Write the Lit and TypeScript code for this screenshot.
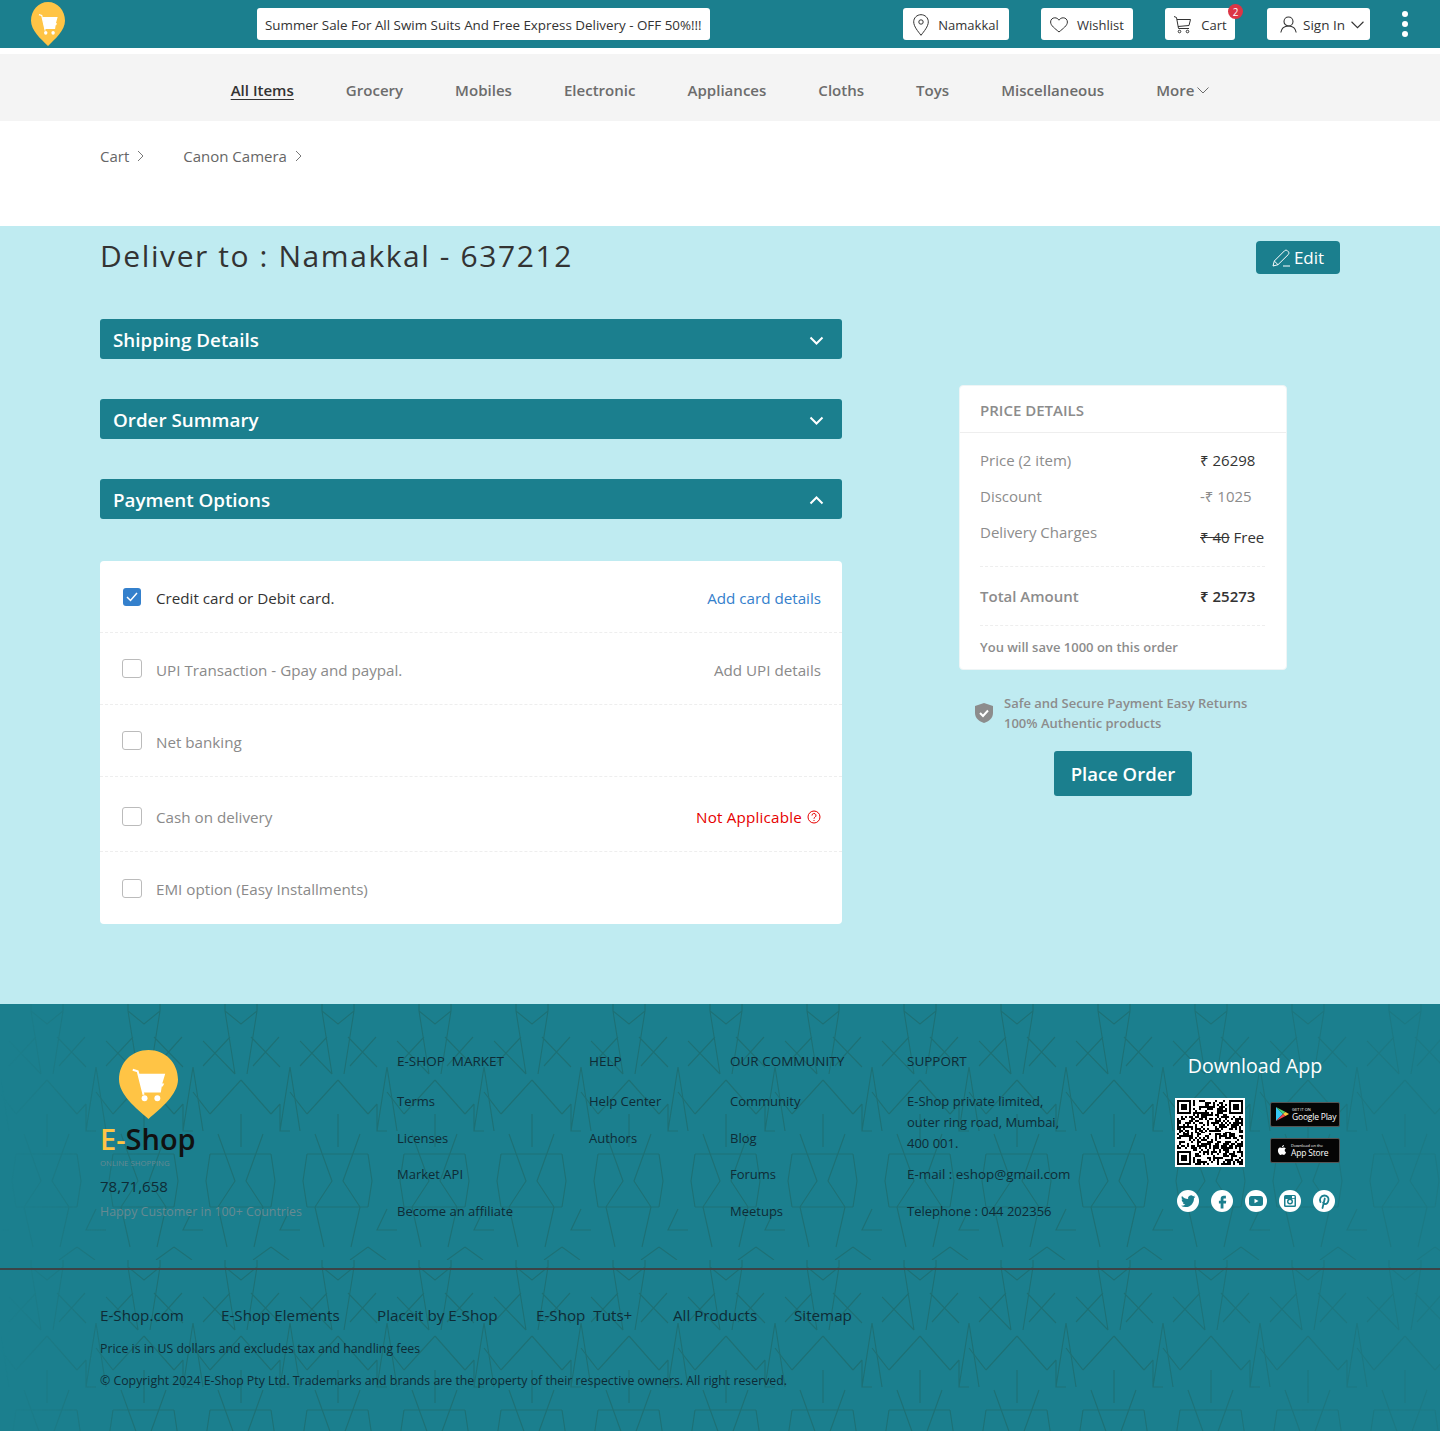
import { LitElement, html, css, svg } from "lit";
import { customElement } from "lit/decorators.js";

const chevron = (w = 12, h = 7) => html`<svg class="chev" width=${w} height=${h} viewBox="0 0 12 7" fill="none" stroke="currentColor" stroke-width="1"><path d="M.5.5 6 6l5.5-5.5" /></svg>`;
const barChevron = (up = false) => html`<svg class="chev ${up ? "up" : ""}" width="15" height="9" viewBox="0 0 15 9" fill="none" stroke="currentColor" stroke-width="2"><path d="M1.500 1.500l6 6 6-6" /></svg>`;
const crumbArrow = html`<svg width="7" height="12" viewBox="0 0 7 12" fill="none" stroke="#777" stroke-width="1"><path d="M1 1l5 5-5 5" /></svg>`;

const pinLogo = (w: number, h: number) => html`<svg width=${w} height=${h} viewBox="0 0 60 70" preserveAspectRatio="none">
  <path fill="#ffc445" d="M30 0C13 0 0 13 0 30c0 15 17 29 30 40 13-11 30-25 30-40C60 13 47 0 30 0z" />
  <path fill="none" stroke="#fff" stroke-width="2" d="M14 20l5 1.500 6 24" />
  <path fill="#fff" d="M20 24h27l-3 10h2l-1.500 3h-1l-1 6H24z" />
  <circle cx="26" cy="49" r="3" fill="#fff" /><circle cx="39" cy="49" r="3" fill="#fff" />
</svg>`;

const pinIcon = html`<svg width="16" height="22" viewBox="0 0 16 22" fill="none" stroke="#333" stroke-width="1"><path d="M8 .7C3.900.7.700 3.900.700 7.800c0 4.700 4.300 9.500 7.300 13.500 3-4 7.300-8.800 7.300-13.500C15.300 3.900 12.100.7 8 .7z" /><circle cx="8" cy="8" r="2.200" /></svg>`;
const heartIcon = html`<svg width="18" height="16" viewBox="0 0 18 16" fill="none" stroke="#333" stroke-width="1"><path d="M9 15C5 11.500.6 8.700.6 5 .6 2.600 2.400.8 4.800.8 6.600.8 8.100 1.700 9 3.200 9.900 1.700 11.400.8 13.200.8c2.400 0 4.200 1.800 4.200 4.200 0 3.700-4.400 6.500-8.400 10z" /></svg>`;
const cartIcon = html`<svg width="19" height="18" viewBox="0 0 18 18" fill="none" stroke="#333" stroke-width="1"><path d="M.5.500 3 1.500 5 12.500h10.500M3.500 3.500H17l-1.500 6L4.500 10.500" /><circle cx="6" cy="15.500" r="1.300" /><circle cx="14" cy="15.500" r="1.300" /></svg>`;
const userIcon = html`<svg width="17" height="17" viewBox="0 0 17 17" fill="none" stroke="#333" stroke-width="1.100"><circle cx="8.500" cy="5.500" r="4.500" /><path d="M.8 16.500c.6-3.800 3.300-6.500 7.700-6.500s7.100 2.700 7.700 6.500" /></svg>`;
const editIcon = html`<svg width="19" height="18" viewBox="0 0 19 18" fill="none" stroke="#fff" stroke-width="1"><path d="M1 17l1.300-5L12.500 1.800c.8-.8 2.200-.8 3 0l.8.8c.8.8.8 2.100 0 2.900L6 15.700 1 17zM2.300 12L6 15.700M11 17h7" /></svg>`;

const qrCells = () => {
  const n = 33;
  const cells: string[] = [];
  let seed = 7;
  const finder = (x: number, y: number) =>
    x >= 0 && y >= 0 && x < 7 && y < 7 && (x === 0 || y === 0 || x === 6 || y === 6 || (x > 1 && y > 1 && x < 5 && y < 5));
  const inFinder = (x: number, y: number) => (x < 8 && y < 8) || (x > n - 9 && y < 8) || (x < 8 && y > n - 9);
  for (let y = 0; y < n; y++) {
    for (let x = 0; x < n; x++) {
      seed = (seed * 1103515245 + 12345) & 0x7fffffff;
      let on = (seed >> 16) % 100 < 52;
      if (inFinder(x, y)) on = finder(x, y) || finder(x - (n - 7), y) || finder(x, y - (n - 7));
      if (on) cells.push(`M${x} ${y}h1v1h-1z`);
    }
  }
  return cells.join("");
};

const socials = [
  svg`<path transform="translate(4 4) scale(.6)" fill="#1b7f8e" d="M23.953 4.570a10 10 0 01-2.825.775 4.958 4.958 0 002.163-2.723c-.951.555-2.005.959-3.127 1.184a4.920 4.920 0 00-8.384 4.482C7.690 8.095 4.067 6.130 1.640 3.162a4.822 4.822 0 00-.666 2.475c0 1.710.870 3.213 2.188 4.096a4.904 4.904 0 01-2.228-.616v.060a4.923 4.923 0 003.946 4.827 4.996 4.996 0 01-2.212.085 4.936 4.936 0 004.604 3.417 9.867 9.867 0 01-6.102 2.105c-.390 0-.779-.023-1.170-.067a13.995 13.995 0 007.557 2.209c9.053 0 13.998-7.496 13.998-13.985 0-.210 0-.420-.015-.630A9.935 9.935 0 0024 4.590z" />`,
  svg`<path transform="translate(3 3) scale(.7)" fill="#1b7f8e" d="M14 8h3V4h-3c-2.800 0-4.500 1.800-4.500 4.500V11H7v4h2.500v7h4v-7H17l.5-4h-4V8.700c0-.4.2-.7.5-.7z" />`,
  svg`<rect x="4" y="6" width="14" height="10" rx="2.500" fill="#1b7f8e" /><path fill="#fff" d="M9.500 8.700l4 2.300-4 2.300z" />`,
  svg`<rect x="5" y="5" width="12" height="12" rx="1.500" fill="#1b7f8e" /><rect x="6.500" y="9" width="9" height="6.500" fill="#fff" /><circle cx="11" cy="11.500" r="3" fill="#1b7f8e" /><circle cx="11" cy="11.500" r="1.500" fill="#fff" /><rect x="13" y="6" width="2.500" height="2.200" fill="#fff" />`,
  svg`<path fill="none" stroke="#1b7f8e" stroke-width="1.800" stroke-linecap="round" d="M9.500 18l2.300-9.500M7.500 12C6 9 8 5.500 11.300 5.500c3 0 4.500 2 4.200 4.300-.3 2.500-1.800 4.200-3.600 4.200-1 0-1.700-.6-1.800-1.300" />`,
];

const paymentRows = [
  { label: "Credit card or Debit card.", checked: true, action: "Add card details", kind: "link", h: 72 },
  { label: "UPI Transaction - Gpay and paypal.", action: "Add UPI details", kind: "muted", h: 72 },
  { label: "Net banking", h: 72 },
  { label: "Cash on delivery", action: "Not Applicable", kind: "danger", h: 75, low: true },
  { label: "EMI option (Easy Installments)", h: 72 },
];

const footerColumns = [
  { title: "E-SHOP  MARKET", width: 192, links: ["Terms", "Licenses", "Market API", "Become an affiliate"] },
  { title: "HELP", width: 141, links: ["Help Center", "Authors"] },
  { title: "OUR COMMUNITY", width: 177, links: ["Community", "Blog", "Forums", "Meetups"] },
];

// one period of the footer lattice, drawn three times so lines wrap over the tile edge
const latticePath =
  "M22 0V7L38 20 54 7V0M22 7L32 70M54 7L44 70M0 37L32 70M27 33L0 62M48 33L77 63M76 33L50 62M38 76L7 110M38 76L68 110M7 110L-10 88M68 110L77 100M87 63L77 127H87M87 63L97 127M77 100V127M38 110V143M15 130L32 177 15 203M60 130L43 177 60 203M7 150H68M7 203H68M68 150L72 177 68 203M7 150L3 177 7 203M87 205L77 226H97M68 243L50 256M68 243L86 256M15 203L24 243M60 203L51 243";

@customElement("app-root")
export class AppRoot extends LitElement {
  static styles = css`
    :host {
      display: block;
      font-family: "Open Sans", "Noto Sans", "DejaVu Sans", sans-serif;
      color: #333;
      background: #fff;
      height: 1431px;
      overflow: hidden;
    }
    .topbar {
      height: 48px;
      background: #1b7f8e;
      display: flex;
      align-items: center;
      padding: 0 32px 0 31px;
    }
    .topbar .logo {
      display: flex;
      margin-right: 192px;
    }
    .white-box {
      height: 32px;
      padding-top: 1px;
      background: #fff;
      border-radius: 3px;
      display: flex;
      align-items: center;
      font-size: 13px;
      color: #333;
      white-space: nowrap;
    }
    .promo {
      width: 453px;
      padding-left: 8px;
      box-sizing: border-box;
      font-size: 13.400px;
    }
    .actions {
      margin-left: auto;
      display: flex;
      align-items: center;
      gap: 32px;
    }
    .act {
      box-sizing: border-box;
      position: relative;
      justify-content: center;
      gap: 9px;
    }
    .act.sign {
      justify-content: flex-start;
      gap: 6px;
      padding-left: 13px;
      font-size: 13.500px;
    }
    .badge {
      position: absolute;
      top: -4px;
      right: -8px;
      width: 15px;
      height: 15px;
      border-radius: 50%;
      background: #dc3545;
      color: #fff;
      font-size: 10px;
      display: flex;
      align-items: center;
      justify-content: center;
    }
    .kebab {
      display: flex;
      flex-direction: column;
      gap: 4px;
    }
    .kebab i {
      width: 6px;
      height: 6px;
      border-radius: 50%;
      background: #fff;
    }
    .nav {
      margin-top: 6px;
      height: 67px;
      box-sizing: border-box;
      padding-top: 5px;
      background: #f4f4f4;
      display: flex;
      align-items: center;
      justify-content: center;
      gap: 52px;
      font-size: 15.050px;
      font-weight: 600;
      color: #6c6c6c;
    }
    .nav .active {
      color: #333;
      text-decoration: underline;
      text-underline-offset: 3px;
    }
    .nav .more {
      display: flex;
      align-items: center;
      gap: 3px;
    }
    .crumbs {
      height: 105px;
      box-sizing: border-box;
      padding: 25px 0 0 100px;
      display: flex;
      gap: 39px;
      font-size: 15px;
      color: #666;
    }
    .crumbs span {
      display: flex;
      align-items: center;
      gap: 8px;
      height: 20px;
    }
    .main {
      height: 778px;
      background: #bfebf1;
      padding: 0 100px;
      box-sizing: border-box;
    }
    .deliver {
      display: flex;
      justify-content: space-between;
      height: 93px;
    }
    h1 {
      margin: 8px 0 0;
      font-size: 30px;
      line-height: 44px;
      font-weight: 400;
      letter-spacing: 1.580px;
      color: #333;
    }
    .edit {
      margin-top: 15px;
      width: 84px;
      height: 33px;
      background: #1b7f8e;
      border-radius: 4px;
      color: #fff;
      font-size: 17px;
      display: flex;
      align-items: center;
      justify-content: center;
      gap: 3px;
    }
    .columns {
      display: flex;
    }
    .left {
      width: 742px;
    }
    .bar {
      height: 40px;
      box-sizing: border-box;
      padding: 2px 18px 0 13px;
      background: #1b7f8e;
      border-radius: 3px;
      color: #fff;
      font-size: 18.800px;
      font-weight: 600;
      display: flex;
      align-items: center;
      justify-content: space-between;
      margin-bottom: 40px;
    }
    .bar.last {
      margin-bottom: 0;
    }
    .bar .chev.up {
      transform: rotate(180deg);
    }
    .pay {
      margin-top: 42px;
      background: #fff;
      border-radius: 4px;
      padding: 0 21px 0 22px;
    }
    .pay-row {
      box-sizing: border-box;
      display: flex;
      align-items: center;
      border-bottom: 1px dashed #eee;
      margin: 0 -21px 0 -22px;
      padding: 0 21px 0 22px;
      font-size: 15.200px;
      color: #8a8a8a;
    }
    .pay-row:last-child {
      border-bottom: 0;
    }
    .pay-row.on {
      color: #333;
    }
    .pay-row.low {
      padding-top: 4px;
    }
    .pay-row .label,
    .pay-action {
      padding-top: 2px;
    }
    .box {
      flex: none;
      box-sizing: border-box;
      width: 20px;
      height: 19px;
      border: 1.500px solid #bbb;
      border-radius: 3px;
      margin-right: 14px;
    }
    .box.checked {
      width: 18px;
      height: 18px;
      margin: 0 15px 0 1px;
      border: 0;
      background: #3480cc;
      display: flex;
      align-items: center;
      justify-content: center;
    }
    .pay-action {
      margin-left: auto;
      display: flex;
      align-items: center;
      gap: 5px;
    }
    .link {
      color: #3480cc;
    }
    .danger {
      color: #e60000;
      letter-spacing: 0.2px;
    }
    .muted {
      color: #8a8a8a;
    }
    .right {
      width: 328px;
      margin: 66px 0 0 117px;
    }
    .price {
      background: #fff;
      border-radius: 4px;
      height: 285px;
      box-sizing: border-box;
      border: 1px solid #eef5f6;
    }
    .price h2 {
      margin: 0;
      height: 47px;
      box-sizing: border-box;
      padding-left: 20px;
      border-bottom: 1px solid #eee;
      font-size: 15px;
      line-height: 49px;
      font-weight: 600;
      color: #8c8c8c;
    }
    .price-body {
      padding: 9px 21px 0 20px;
    }
    .line {
      display: grid;
      grid-template-columns: 220px 1fr;
      height: 36px;
      line-height: 36px;
      font-size: 15px;
      color: #8c8c8c;
    }
    .line b {
      font-weight: 400;
      color: #333;
      white-space: nowrap;
    }
    .line .light {
      color: #8c8c8c;
    }
    .line.delivery {
      height: 52px;
    }
    .line.delivery b {
      padding-top: 5px;
    }
    s {
      text-decoration-thickness: 1px;
    }
    .total {
      border-top: 1px dashed #eee;
      border-bottom: 1px dashed #eee;
      height: 58px;
      line-height: 58px;
      font-weight: 600;
    }
    .total b {
      font-weight: 600;
    }
    .save {
      font-size: 13px;
      font-weight: 600;
      color: #8c8c8c;
      line-height: 42px;
    }
    .trust {
      display: flex;
      align-items: center;
      gap: 11px;
      margin: 23px 0 0 16px;
      font-size: 13px;
      line-height: 20px;
      font-weight: 600;
      color: #8c8c8c;
    }
    .place {
      margin: 18px auto 0;
      width: 138px;
      height: 45px;
      background: #1b7f8e;
      border-radius: 3px;
      color: #fff;
      font-size: 18.500px;
      font-weight: 600;
      display: flex;
      align-items: center;
      justify-content: center;
    }
    .footer {
      position: relative;
      height: 427px;
      background: #1b7f8e;
      color: #0e2c36;
      overflow: hidden;
    }
    .texture {
      position: absolute;
      inset: 0;
      width: 100%;
      height: 100%;
    }
    .foot-top,
    .foot-bottom {
      position: relative;
    }
    .foot-top {
      height: 266px;
      box-sizing: border-box;
      padding: 46px 100px 0;
      display: flex;
      border-bottom: 2px solid #3c4447;
    }
    .brand {
      width: 297px;
    }
    .brand .pin {
      display: flex;
      margin-left: 19px;
    }
    .wordmark {
      font-size: 29px;
      line-height: 36px;
      font-weight: 600;
      margin: 2px 0 0;
      color: #111;
    }
    .wordmark em {
      font-style: normal;
      color: #ffc445;
    }
    .tag {
      font-size: 7.800px;
      line-height: 10px;
      margin-top: 1px;
    }
    .tag,
    .happy {
      color: #678a92;
    }
    .count {
      font-size: 15px;
      line-height: 20px;
      margin-top: 8px;
    }
    .happy {
      font-size: 12.400px;
      line-height: 18px;
      margin-top: 7px;
    }
    .col {
      font-size: 13px;
      line-height: 20px;
      padding-top: 1px;
    }
    .col div {
      height: 36.600px;
      white-space: pre;
    }
    .col .head {
      height: 40px;
      font-size: 13.500px;
    }
    .support {
      width: 165px;
    }
    .support .addr {
      height: auto;
      white-space: normal;
      line-height: 21px;
      margin-bottom: 10px;
    }
    .support .wide {
      font-size: 13.400px;
    }
    .app {
      margin-left: auto;
      width: 165px;
    }
    .app h3 {
      margin: 2px 5px 18px 0;
      font-size: 19.600px;
      line-height: 28px;
      font-weight: 400;
      color: #fff;
      text-align: center;
    }
    .stores {
      display: flex;
      justify-content: space-between;
    }
    .qr {
      display: block;
      background: #fff;
    }
    .store-list {
      display: flex;
      flex-direction: column;
      gap: 11.500px;
      padding-top: 4px;
    }
    .store {
      width: 70px;
      height: 24.500px;
      box-sizing: border-box;
      background: #050505;
      border: 1px solid #555;
      border-radius: 2px;
      color: #fff;
      display: flex;
      align-items: center;
      gap: 3px;
      padding-left: 5px;
    }
    .store small {
      display: block;
      font-size: 4px;
      line-height: 5px;
    }
    .store span {
      display: block;
      font-size: 8.500px;
      line-height: 9px;
      letter-spacing: -0.2px;
      white-space: nowrap;
    }
    .social {
      display: flex;
      justify-content: center;
      gap: 12px;
      margin: 23px 3px 0 0;
    }
    .social svg {
      display: block;
    }
    .foot-bottom {
      padding: 33px 100px 0;
    }
    .foot-links {
      display: flex;
      font-size: 15.200px;
      line-height: 24px;
    }
    .foot-links span {
      white-space: pre;
    }
    .foot-note {
      font-size: 12.320px;
      line-height: 20px;
      margin-top: 12px;
    }
  `;

  private texture() {
    return html`<svg class="texture" aria-hidden="true">
      <defs>
        <pattern id="lattice" width="97" height="256" patternUnits="userSpaceOnUse" x="9" y="0">
          ${[-97, 0, 97].map(
            (dx) => svg`<path transform="translate(${dx} 0)" fill="none" stroke="#1d6f73" stroke-width="1.200" d=${latticePath} />`,
          )}
        </pattern>
        <linearGradient id="fade" x1="0" x2="1" y1="0" y2="0">
          <stop offset="0" stop-color="#fff" stop-opacity="0" />
          <stop offset=".1" stop-color="#fff" stop-opacity="1" />
          <stop offset=".78" stop-color="#fff" stop-opacity="1" />
          <stop offset="1" stop-color="#fff" stop-opacity=".35" />
        </linearGradient>
        <mask id="fade-mask"><rect width="1440" height="427" fill="url(#fade)" /></mask>
      </defs>
      <rect width="1440" height="427" fill="url(#lattice)" mask="url(#fade-mask)" opacity=".9" />
    </svg>`;
  }

  render() {
    return html`
      <div class="topbar">
        <span class="logo">${pinLogo(34, 44)}</span>
        <div class="white-box promo">Summer Sale For All Swim Suits And Free Express Delivery - OFF 50%!!!</div>
        <div class="actions">
          <div class="white-box act" style="width:106px">${pinIcon}Namakkal</div>
          <div class="white-box act" style="width:92px">${heartIcon}Wishlist</div>
          <div class="white-box act" style="width:70px">${cartIcon}Cart<span class="badge">2</span></div>
          <div class="white-box act sign" style="width:103px">${userIcon}<span>Sign In</span>${chevron(13, 8)}</div>
          <div class="kebab"><i></i><i></i><i></i></div>
        </div>
      </div>
      <nav class="nav">
        <span class="active">All Items</span>
        ${["Grocery", "Mobiles", "Electronic", "Appliances", "Cloths", "Toys", "Miscellaneous"].map((n) => html`<span>${n}</span>`)}
        <span class="more">More ${chevron()}</span>
      </nav>
      <div class="crumbs">
        <span>Cart ${crumbArrow}</span>
        <span>Canon Camera ${crumbArrow}</span>
      </div>
      <main class="main">
        <div class="deliver">
          <h1>Deliver to : Namakkal - 637212</h1>
          <div class="edit">${editIcon}Edit</div>
        </div>
        <div class="columns">
          <div class="left">
            <div class="bar">Shipping Details ${barChevron()}</div>
            <div class="bar">Order Summary ${barChevron()}</div>
            <div class="bar last">Payment Options ${barChevron(true)}</div>
            <div class="pay">
              ${paymentRows.map(
                (r) => html`<div class="pay-row ${r.checked ? "on" : ""} ${r.low ? "low" : ""}" style="height:${r.h}px">
                  ${r.checked
                    ? html`<span class="box checked"><svg width="12" height="10" viewBox="0 0 12 10" fill="none" stroke="#fff" stroke-width="1.500"><path d="M1 5l3.500 3.500L11 1" /></svg></span>`
                    : html`<span class="box"></span>`}
                  <span class="label">${r.label}</span>
                  ${r.action
                    ? html`<span class="pay-action ${r.kind}">
                        ${r.action}
                        ${r.kind === "danger"
                          ? html`<svg width="14" height="14" viewBox="0 0 14 14" fill="none" stroke="#e60000" stroke-width="1"><circle cx="7" cy="7" r="6" /><path d="M5 5.500a2 2 0 1 1 3 1.700c-.7.4-1 .8-1 1.500M7 10v1" /></svg>`
                          : ""}
                      </span>`
                    : ""}
                </div>`,
              )}
            </div>
          </div>
          <div class="right">
            <div class="price">
              <h2>PRICE DETAILS</h2>
              <div class="price-body">
                <div class="line"><span>Price (2 item)</span><b>₹ 26298</b></div>
                <div class="line"><span>Discount</span><b class="light">-₹ 1025</b></div>
                <div class="line delivery"><span>Delivery Charges</span><b><s>₹ 40</s> Free</b></div>
                <div class="line total"><span>Total Amount</span><b>₹ 25273</b></div>
                <div class="save">You will save 1000 on this order</div>
              </div>
            </div>
            <div class="trust">
              <svg width="18" height="20" viewBox="0 0 18 20"><path fill="#8c8c8c" d="M9 0l9 3v7c0 5-4 8.500-9 10-5-1.500-9-5-9-10V3z" /><path fill="none" stroke="#fff" stroke-width="2" d="M5 10l3 3 5-5.500" /></svg>
              <div>Safe and Secure Payment Easy Returns<br />100% Authentic products</div>
            </div>
            <div class="place">Place Order</div>
          </div>
        </div>
      </main>
      <footer class="footer">
        ${this.texture()}
        <div class="foot-top">
          <div class="brand">
            <span class="pin">${pinLogo(59, 69)}</span>
            <div class="wordmark"><em>E-</em>Shop</div>
            <div class="tag">ONLINE SHOPPING</div>
            <div class="count">78,71,658</div>
            <div class="happy">Happy Customer in 100+ Countries</div>
          </div>
          ${footerColumns.map(
            (c) => html`<div class="col" style="width:${c.width}px">
              <div class="head">${c.title}</div>
              ${c.links.map((l) => html`<div>${l}</div>`)}
            </div>`,
          )}
          <div class="col support">
            <div class="head">SUPPORT</div>
            <div class="addr">E-Shop private limited, outer ring road, Mumbai, 400 001.</div>
            <div class="wide">E-mail : eshop@gmail.com</div>
            <div>Telephone : 044 202356</div>
          </div>
          <div class="app">
            <h3>Download App</h3>
            <div class="stores">
              <svg class="qr" width="70" height="69" viewBox="-1 -1 35 35" shape-rendering="crispEdges"><path d=${qrCells()} fill="#000" /></svg>
              <div class="store-list">
                <div class="store">
                  <svg width="13" height="14" viewBox="0 0 13 14"><path fill="#37c6f4" d="M0 0l7 7-7 7z" /><path fill="#4ad377" d="M0 0l9.500 5L7 7z" /><path fill="#f1404b" d="M0 14l9.500-5L7 7z" /><path fill="#ffc83d" d="M9.500 5L13 7 9.500 9 7 7z" /></svg>
                  <div><small>GET IT ON</small><span>Google Play</span></div>
                </div>
                <div class="store">
                  <svg width="12" height="14" viewBox="0 0 24 24"><path fill="#fff" d="M18.710 19.500c-.83 1.240-1.710 2.450-3.050 2.470-1.340.03-1.770-.79-3.290-.79-1.530 0-2 .77-3.270.82-1.310.05-2.300-1.320-3.140-2.530C4.250 17 2.940 12.450 4.700 9.390c.87-1.520 2.430-2.480 4.120-2.510 1.280-.02 2.500.87 3.290.87.78 0 2.260-1.070 3.810-.91.65.03 2.470.26 3.640 1.980-.09.06-2.170 1.280-2.150 3.810.03 3.020 2.650 4.030 2.680 4.040-.03.07-.42 1.440-1.380 2.830M13 3.500c.73-.83 1.940-1.460 2.940-1.500.13 1.170-.34 2.350-1.040 3.190-.69.85-1.830 1.510-2.950 1.420-.15-1.150.41-2.350 1.050-3.110z" /></svg>
                  <div><small>Download on the</small><span>App Store</span></div>
                </div>
              </div>
            </div>
            <div class="social">
              ${socials.map(
                (s) => html`<svg width="22" height="22" viewBox="0 0 22 22"><circle cx="11" cy="11" r="11" fill="#fff" />${s}</svg>`,
              )}
            </div>
          </div>
        </div>
        <div class="foot-bottom">
          <div class="foot-links">
            <span style="width:121px">E-Shop.com</span>
            <span style="width:156px">E-Shop Elements</span>
            <span style="width:159px">Placeit by E-Shop</span>
            <span style="width:137px">E-Shop  Tuts+</span>
            <span style="width:121px">All Products</span>
            <span>Sitemap</span>
          </div>
          <div class="foot-note">Price is in US dollars and excludes tax and handling fees</div>
          <div class="foot-note">© Copyright 2024 E-Shop Pty Ltd. Trademarks and brands are the property of their respective owners. All right reserved.</div>
        </div>
      </footer>
    `;
  }
}
